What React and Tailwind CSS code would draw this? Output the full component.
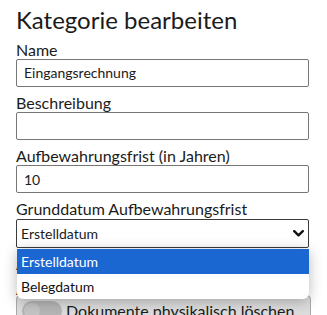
import { useState } from "react";

// Kategorie bearbeiten — edit form with an open native-style select list.

const FIELDS = [
  { label: "Name", value: "Eingangsrechnung" },
  { label: "Beschreibung", value: "" },
  { label: "Aufbewahrungsfrist (in Jahren)", value: "10" },
];

const OPTIONS = ["Erstelldatum", "Belegdatum"];

function Chevron() {
  return (
    <svg width="11" height="7" viewBox="0 0 11 7" className="text-[#111]">
      <path
        d="M1.2 1.2 L5.5 5.3 L9.8 1.2"
        fill="none"
        stroke="currentColor"
        strokeWidth="2.4"
        strokeLinecap="round"
        strokeLinejoin="round"
      />
    </svg>
  );
}

export default function App() {
  const [selected, setSelected] = useState(0);
  const [hover] = useState(0);

  return (
    <div className="min-h-[315px] bg-white pl-4 pr-[18px] pt-[6px] font-['Lato',sans-serif] text-[#1b1b1b] overflow-hidden">
      <h1 className="text-[24px] leading-[1.2] mb-[5px]">
        Kategorie bearbeiten
      </h1>

      {FIELDS.map((f) => (
        <div key={f.label} className="mb-1.5">
          <label className="block text-[16px] leading-[1.2]">{f.label}</label>
          <input
            defaultValue={f.value}
            className="block w-full h-7 border border-[#767676] rounded-[2px] px-[7px] text-[14px] outline-none"
          />
        </div>
      ))}

      <div className="mb-1.5 relative">
        <label className="block text-[16px] leading-[1.2]">
          Grunddatum Aufbewahrungsfrist
        </label>
        <div className="flex items-center justify-between h-[29px] border border-[#3b3b3b] rounded-[2px] pl-1 pr-[4px] text-[14px]">
          <span>{OPTIONS[selected]}</span>
          <Chevron />
        </div>

        {/* open option list */}
        <ul className="absolute left-px right-0 top-[50px] z-10 bg-white rounded-b-[6px] shadow-[0_2px_14px_rgba(0,0,0,0.28)] overflow-hidden text-[14px]">
          {OPTIONS.map((o, i) => (
            <li
              key={o}
              onClick={() => setSelected(i)}
              className={[
                "h-[25px] flex items-center px-1",
                i === hover ? "bg-[#1a67d2] text-white" : "text-[#111]",
              ].join(" ")}
            >
              {o}
            </li>
          ))}
        </ul>
      </div>

      <div className="mb-1.5">
        <label className="block text-[16px] leading-[1.2]">Aktion nach Ablauf</label>
        <label className="block text-[16px] leading-[1.2] mt-[6px]">Archivierung</label>
      </div>

      <div className="-mr-0.5 mt-[-9px] border border-[#a9a9a9] rounded-[4px] bg-[#dcdcdc] px-[5px] pt-[5px] pb-2 flex items-center gap-1">
        <span className="w-10 h-5 rounded-full bg-[#b5b5b5] relative">
          <span className="absolute left-[2px] top-[2px] w-4 h-4 rounded-full bg-[#c4c4c4]" />
        </span>
        <span className="text-[16px] leading-[1.2]">Dokumente physikalisch löschen</span>
      </div>
    </div>
  );
}
